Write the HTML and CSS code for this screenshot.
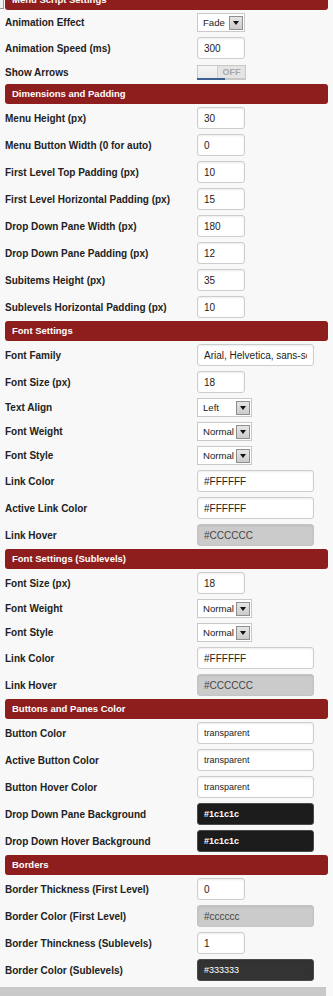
FILE: index.html
```html
<!DOCTYPE html>
<html lang="en">
<head>
    <meta charset="UTF-8">
    <meta name="viewport" content="width=device-width, initial-scale=1.0">
    <title>Menu Settings</title>
    <link rel="stylesheet" href="styles.css">
</head>
<body>

<span class="corner-box"></span>

<div class="settings-panel">

    <!-- Menu script -->
    <section class="settings-group first-group">
        <h2 class="group-title">Menu Script Settings</h2>
        <div class="group-body">
            <div class="field">
                <label class="field-label">Animation Effect</label>
                <div class="select select-fade"><span>Fade</span><span class="select-arrow"></span></div>
            </div>
            <div class="field">
                <label class="field-label">Animation Speed (ms)</label>
                <input class="text-input small" type="text" value="300" readonly>
            </div>
            <div class="field toggle-field">
                <label class="field-label">Show Arrows</label>
                <div class="toggle"><span class="toggle-knob"></span><span class="toggle-text">OFF</span></div>
            </div>
        </div>
    </section>

    <!-- Dimensions -->
    <section class="settings-group">
        <h2 class="group-title">Dimensions and Padding</h2>
        <div class="group-body">
            <div class="field">
                <label class="field-label">Menu Height (px)</label>
                <input class="text-input small" type="text" value="30" readonly>
            </div>
            <div class="field">
                <label class="field-label">Menu Button Width (0 for auto)</label>
                <input class="text-input small" type="text" value="0" readonly>
            </div>
            <div class="field">
                <label class="field-label">First Level Top Padding (px)</label>
                <input class="text-input small" type="text" value="10" readonly>
            </div>
            <div class="field">
                <label class="field-label">First Level Horizontal Padding (px)</label>
                <input class="text-input small" type="text" value="15" readonly>
            </div>
            <div class="field">
                <label class="field-label">Drop Down Pane Width (px)</label>
                <input class="text-input small" type="text" value="180" readonly>
            </div>
            <div class="field">
                <label class="field-label">Drop Down Pane Padding (px)</label>
                <input class="text-input small" type="text" value="12" readonly>
            </div>
            <div class="field">
                <label class="field-label">Subitems Height (px)</label>
                <input class="text-input small" type="text" value="35" readonly>
            </div>
            <div class="field">
                <label class="field-label">Sublevels Horizontal Padding (px)</label>
                <input class="text-input small" type="text" value="10" readonly>
            </div>
        </div>
    </section>

    <!-- Font -->
    <section class="settings-group">
        <h2 class="group-title">Font Settings</h2>
        <div class="group-body">
            <div class="field">
                <label class="field-label">Font Family</label>
                <input class="text-input wide" type="text" value="Arial, Helvetica, sans-serif" readonly>
            </div>
            <div class="field">
                <label class="field-label">Font Size (px)</label>
                <input class="text-input small" type="text" value="18" readonly>
            </div>
            <div class="field">
                <label class="field-label">Text Align</label>
                <div class="select select-mid"><span>Left</span><span class="select-arrow"></span></div>
            </div>
            <div class="field">
                <label class="field-label">Font Weight</label>
                <div class="select select-mid"><span>Normal</span><span class="select-arrow"></span></div>
            </div>
            <div class="field">
                <label class="field-label">Font Style</label>
                <div class="select select-mid"><span>Normal</span><span class="select-arrow"></span></div>
            </div>
            <div class="field">
                <label class="field-label">Link Color</label>
                <input class="text-input wide" type="text" value="#FFFFFF" readonly>
            </div>
            <div class="field">
                <label class="field-label">Active Link Color</label>
                <input class="text-input wide" type="text" value="#FFFFFF" readonly>
            </div>
            <div class="field">
                <label class="field-label">Link Hover</label>
                <input class="text-input wide color-light" type="text" value="#CCCCCC" readonly>
            </div>
        </div>
    </section>

    <!-- Font sublevels -->
    <section class="settings-group">
        <h2 class="group-title">Font Settings (Sublevels)</h2>
        <div class="group-body">
            <div class="field">
                <label class="field-label">Font Size (px)</label>
                <input class="text-input small" type="text" value="18" readonly>
            </div>
            <div class="field">
                <label class="field-label">Font Weight</label>
                <div class="select select-mid"><span>Normal</span><span class="select-arrow"></span></div>
            </div>
            <div class="field">
                <label class="field-label">Font Style</label>
                <div class="select select-mid"><span>Normal</span><span class="select-arrow"></span></div>
            </div>
            <div class="field">
                <label class="field-label">Link Color</label>
                <input class="text-input wide" type="text" value="#FFFFFF" readonly>
            </div>
            <div class="field">
                <label class="field-label">Link Hover</label>
                <input class="text-input wide color-light" type="text" value="#CCCCCC" readonly>
            </div>
        </div>
    </section>

    <!-- Buttons and panes -->
    <section class="settings-group">
        <h2 class="group-title">Buttons and Panes Color</h2>
        <div class="group-body">
            <div class="field">
                <label class="field-label">Button Color</label>
                <input class="text-input wide small-text" type="text" value="transparent" readonly>
            </div>
            <div class="field">
                <label class="field-label">Active Button Color</label>
                <input class="text-input wide small-text" type="text" value="transparent" readonly>
            </div>
            <div class="field">
                <label class="field-label">Button Hover Color</label>
                <input class="text-input wide small-text" type="text" value="transparent" readonly>
            </div>
            <div class="field">
                <label class="field-label">Drop Down Pane Background</label>
                <input class="text-input wide color-dark" type="text" value="#1c1c1c" readonly>
            </div>
            <div class="field">
                <label class="field-label">Drop Down Hover Background</label>
                <input class="text-input wide color-dark" type="text" value="#1c1c1c" readonly>
            </div>
        </div>
    </section>

    <!-- Borders -->
    <section class="settings-group">
        <h2 class="group-title">Borders</h2>
        <div class="group-body">
            <div class="field">
                <label class="field-label">Border Thickness (First Level)</label>
                <input class="text-input small" type="text" value="0" readonly>
            </div>
            <div class="field">
                <label class="field-label">Border Color (First Level)</label>
                <input class="text-input wide color-light" type="text" value="#cccccc" readonly>
            </div>
            <div class="field">
                <label class="field-label">Border Thinckness (Sublevels)</label>
                <input class="text-input small" type="text" value="1" readonly>
            </div>
            <div class="field">
                <label class="field-label">Border Color (Sublevels)</label>
                <input class="text-input wide color-charcoal" type="text" value="#333333" readonly>
            </div>
        </div>
    </section>

</div>

<div class="footer-bar"></div>

</body>
</html>
```

FILE: styles.css
```css
/* page */
body {
    font-family: "Liberation Sans", Arial, sans-serif;
    background-color: #f8f8f8;
    color: #222;
    margin: 0;
    padding: 0;
    overflow: hidden;
}

.corner-box {
    position: absolute;
    left: -3px;
    top: -2px;
    width: 5px;
    height: 9px;
    border: 1px solid #9a9a9a;
    background: #f2f2f2;
}

.settings-panel {
    padding: 0 5px;
}

/* group headers */
.group-title {
    margin: 0;
    height: 20px;
    line-height: 20px;
    padding-left: 7px;
    background-color: #8e1e1e;
    color: #fff;
    font-size: 9.5px;
    font-weight: bold;
    border-radius: 3px;
}

.first-group .group-title {
    margin-top: -10px;
}

.group-body {
    display: flex;
    flex-direction: column;
    gap: 5px;
    padding: 3px 0;
}

/* rows */
.field {
    display: flex;
    align-items: center;
}

.field-label {
    width: 192px;
    flex-shrink: 0;
    font-size: 10px;
    font-weight: bold;
    color: #222;
}

/* text inputs */
.text-input {
    box-sizing: border-box;
    height: 22px;
    padding: 0 6px;
    border: 1px solid #cdcdcd;
    border-radius: 3px;
    background: #fff;
    box-shadow: inset 0 1px 2px rgba(0, 0, 0, 0.08);
    font-family: "Liberation Sans", Arial, sans-serif;
    font-size: 10px;
    color: #222;
    outline: none;
}

.text-input.small {
    width: 48px;
}

.text-input.wide {
    width: 117px;
}

.small-text {
    font-size: 9px;
}

.color-light {
    background: #cbcbcb;
    border-color: #c4c4c4;
    color: #444;
}

.color-dark {
    background: #1c1c1c;
    border-color: #4a4a4a;
    color: #fff;
    font-size: 9px;
    font-weight: bold;
}

.color-charcoal {
    background: #333333;
    border-color: #4a4a4a;
    color: #fff;
    font-size: 9px;
}

/* selects */
.select {
    box-sizing: border-box;
    height: 19px;
    display: flex;
    align-items: center;
    justify-content: space-between;
    padding: 0 1px 0 5px;
    border: 1px solid #c9c9c9;
    background: #fff;
    font-size: 9.6px;
    color: #222;
}

.select-fade {
    width: 48px;
}

.select-mid {
    width: 55px;
}

.select-arrow {
    box-sizing: border-box;
    flex-shrink: 0;
    width: 14px;
    height: 14px;
    border: 1px solid #8f8f8f;
    background: linear-gradient(#e6e6e6, #cbcbcb);
    position: relative;
}

.select-arrow::after {
    content: "";
    position: absolute;
    left: 3px;
    top: 4px;
    border-left: 3.5px solid transparent;
    border-right: 3.5px solid transparent;
    border-top: 4px solid #111;
}

/* on/off switch */
.toggle-field {
    height: 17px;
}

.toggle {
    box-sizing: border-box;
    width: 49px;
    height: 15px;
    display: flex;
    border: 1px solid #c8c8c8;
    border-bottom: 2px solid #c8c8c8;
    background: #e4e4e4;
    position: relative;
}

.toggle::after {
    content: "";
    position: absolute;
    left: -1px;
    bottom: -2px;
    width: 28px;
    height: 2px;
    background: #3d5f93;
}

.toggle-knob {
    width: 19px;
    background: linear-gradient(#f6f6f6, #e9e9e9);
    border-right: 1px solid #cfcfcf;
}

.toggle-text {
    flex: 1;
    text-align: center;
    font-size: 9px;
    font-weight: bold;
    line-height: 12px;
    color: #a9a9a9;
}

/* bottom strip */
.footer-bar {
    margin-top: 3px;
    width: 326px;
    height: 12px;
    background: #c9c9c9;
}
```
